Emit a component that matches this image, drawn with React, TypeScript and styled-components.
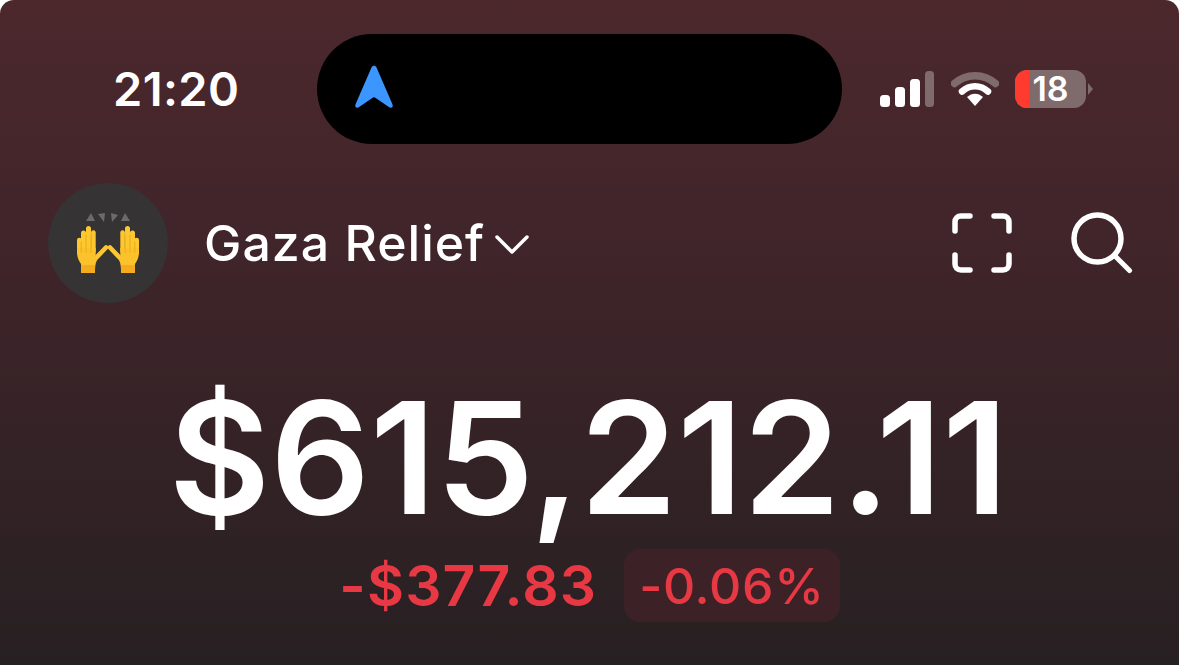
import React from "react";
import styled, { createGlobalStyle } from "styled-components";

const GlobalStyle = createGlobalStyle`
  html, body {
    margin: 0;
    padding: 0;
    background: #ffffff;
  }
`;

const Phone = styled.div`
  width: 1179px;
  height: 665px;
  overflow: hidden;
  border-radius: 14px 14px 0 0;
  background: linear-gradient(180deg, #4c282d 0%, #3d2429 45%, #272022 100%);
  font-family: Inter, "Liberation Sans", sans-serif;
  color: #ffffff;
`;

const StatusBar = styled.div`
  display: flex;
  align-items: center;
  height: 110px;
  padding: 34px 0 0 113px;
`;

const Time = styled.div`
  width: 204px;
  margin-top: -2px;
  font-size: 47px;
  font-weight: 600;
  letter-spacing: 0.4px;
`;

const Island = styled.div`
  display: flex;
  align-items: center;
  width: 525px;
  height: 110px;
  padding: 0 0 4px 36px;
  box-sizing: border-box;
  border-radius: 55px;
  background: #000000;
`;

const StatusIcons = styled.div`
  display: flex;
  align-items: center;
  margin-left: 38px;
  gap: 17px;
`;

const Battery = styled.div`
  display: flex;
  align-items: center;
  gap: 2px;
  margin-left: -1px;
`;

const BatteryBody = styled.div`
  position: relative;
  width: 71px;
  height: 38px;
  border-radius: 12px;
  background: #7f6a6c;
  display: flex;
  align-items: center;
  justify-content: center;
  font-size: 34px;
  font-weight: 600;
  line-height: 38px;
  box-sizing: border-box;
`;

const BatteryLevel = styled.div`
  position: absolute;
  left: 0;
  top: 0;
  bottom: 0;
  width: 14px;
  border-radius: 12px 0 0 12px;
  background: #ff3b30;
`;

const BatteryLabel = styled.span`
  position: relative;
`;

const BatteryTip = styled.div`
  width: 0;
  height: 0;
  border-top: 6px solid transparent;
  border-bottom: 6px solid transparent;
  border-left: 5px solid #7f6a6c;
`;

const Header = styled.div`
  display: flex;
  align-items: center;
  height: 120px;
  margin-top: 39px;
  padding: 0 46px 0 48px;
`;

const Avatar = styled.div`
  display: flex;
  align-items: center;
  justify-content: center;
  width: 120px;
  height: 120px;
  border-radius: 50%;
  background: #353334;
`;

const AccountName = styled.div`
  margin-left: 36px;
  font-size: 50px;
  font-weight: 500;
  letter-spacing: 1px;
`;

const Chevron = styled.svg`
  margin-left: 10px;
  margin-top: 2px;
`;

const HeaderActions = styled.div`
  display: flex;
  align-items: center;
  margin-left: auto;
  gap: 59px;
`;

const Balance = styled.div`
  margin-top: 75px;
  margin-left: -2px;
  text-align: center;
  font-size: 156px;
  font-weight: 600;
  line-height: 160px;
  letter-spacing: 0;
`;

const ChangeRow = styled.div`
  display: flex;
  align-items: center;
  justify-content: center;
  gap: 27px;
  margin-top: 11px;
  color: #e73843;
`;

const ChangeAmount = styled.div`
  font-size: 57px;
  font-weight: 600;
  letter-spacing: 1.1px;
`;

const ChangeBadge = styled.div`
  display: flex;
  align-items: center;
  height: 73px;
  padding: 0 15px;
  border-radius: 16px;
  background: #3c2226;
  font-size: 50px;
  font-weight: 500;
  letter-spacing: 0.7px;
`;

const SignalBars = () => (
  <svg width="54" height="36" viewBox="0 0 54 36">
    <rect x="0" y="24" width="10" height="12" rx="3.5" fill="#fff" />
    <rect x="15" y="16" width="10" height="20" rx="3.5" fill="#fff" />
    <rect x="30" y="8" width="10" height="28" rx="3.5" fill="#fff" />
    <rect x="45" y="0" width="9" height="36" rx="3.5" fill="#7f6a6c" />
  </svg>
);

const WifiIcon = () => (
  <svg width="48" height="36" viewBox="0 0 48 36" fill="none">
    <path d="M3.500 12.500C15 2 33 2 44.500 12.500" stroke="#7f6a6c" strokeWidth="7.500" strokeLinecap="round" />
    <path d="M11 20.500C18.500 13.500 29.500 13.500 37 20.500" stroke="#fff" strokeWidth="6.500" strokeLinecap="round" />
    <path d="M16 26C21 21.500 27 21.500 32 26L24 35Z" fill="#fff" />
  </svg>
);

const NavArrow = () => (
  <svg width="42" height="44" viewBox="0 0 40 42">
    <path
      d="M17.6 2.4C18.6 0 21.4 0 22.4 2.4L37.6 37.5C38.8 40.4 36.4 41.8 34.2 40.2L21.6 31.4C20.6 30.7 19.4 30.7 18.4 31.4L5.8 40.2C3.6 41.8 1.2 40.4 2.4 37.5Z"
      fill="#3c96ff"
    />
  </svg>
);

const ScanIcon = () => (
  <svg width="60" height="60" viewBox="0 0 60 60" fill="none" stroke="#fff" strokeWidth="5.5" strokeLinecap="round">
    <path d="M3 18V9C3 5.5 5.5 3 9 3H18" />
    <path d="M42 3H51C54.5 3 57 5.5 57 9V18" />
    <path d="M57 42V51C57 54.500 54.500 57 51 57H42" />
    <path d="M18 57H9C5.5 57 3 54.500 3 51V42" />
  </svg>
);

const SearchIcon = () => (
  <svg width="62" height="62" viewBox="0 0 62 62" fill="none" stroke="#fff" strokeLinecap="round">
    <circle cx="26.500" cy="26.500" r="23.500" strokeWidth="5.5" />
    <path d="M44 44L58.500 58.500" strokeWidth="5" />
  </svg>
);

const RaisedHand = () => (
  <g>
    <g fill="none" stroke="#fcc72f" strokeLinecap="round">
      <path d="M2.300 27V40" strokeWidth="4.600" />
      <path d="M6.500 20V38" strokeWidth="5" />
      <path d="M11.500 15.500V38" strokeWidth="5" />
      <path d="M16.400 19.500V38" strokeWidth="4.600" />
      <path d="M18 46L29 34.500" strokeWidth="4.600" />
    </g>
    <path d="M0 35H18.700V44L20 47C18 51 18 55 18 60H4V51C1 47 0 43 0 38Z" fill="#fcc22c" />
    <path d="M4 52H18V60H4Z" fill="#f5ab1e" />
    <g fill="none" stroke="#e8a316" strokeWidth="0.800">
      <path d="M4.200 29V40" />
      <path d="M9 22V40" />
      <path d="M14 22V40" />
    </g>
  </g>
);

// the raising hands emoji, drawn since no emoji font is installed
const RaisingHands = () => (
  <svg width="62" height="60" viewBox="0 0 62 60">
    <g fill="#6b6b6b">
      <path d="M9 8L18 8L14 0Z" />
      <path d="M21 1L28 0L27 9Z" />
      <path d="M34 0L41 2L35 9Z" />
      <path d="M48 0L53 8L44 8Z" />
    </g>
    <RaisedHand />
    <g transform="translate(62 0) scale(-1 1)">
      <RaisedHand />
    </g>
  </svg>
);

const App: React.FC = () => (
  <Phone>
    <GlobalStyle />
    <StatusBar>
      <Time>21:20</Time>
      <Island>
        <NavArrow />
      </Island>
      <StatusIcons>
        <SignalBars />
        <WifiIcon />
        <Battery>
          <BatteryBody>
            <BatteryLevel />
            <BatteryLabel>18</BatteryLabel>
          </BatteryBody>
          <BatteryTip />
        </Battery>
      </StatusIcons>
    </StatusBar>
    <Header>
      <Avatar>
        <RaisingHands />
      </Avatar>
      <AccountName>Gaza Relief</AccountName>
      <Chevron width="34" height="20" viewBox="0 0 34 20" fill="none" stroke="#fff" strokeWidth="3.500" strokeLinecap="round" strokeLinejoin="round">
        <path d="M2 3L17 18L32 3" />
      </Chevron>
      <HeaderActions>
        <ScanIcon />
        <SearchIcon />
      </HeaderActions>
    </Header>
    <Balance>$615,212.11</Balance>
    <ChangeRow>
      <ChangeAmount>-$377.83</ChangeAmount>
      <ChangeBadge>-0.06%</ChangeBadge>
    </ChangeRow>
  </Phone>
);

export default App;
